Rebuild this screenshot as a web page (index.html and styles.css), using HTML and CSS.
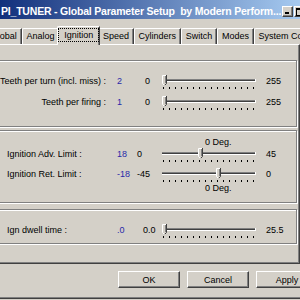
FILE: index.html
```html
<!DOCTYPE html>
<html>
<head>
<meta charset="utf-8">
<link rel="stylesheet" href="styles.css">
</head>
<body>
<svg class="defs" width="0" height="0">
  <defs>
    <g id="track">
      <rect x="2" y="4" width="94" height="1" fill="#808080"/>
      <rect x="2" y="5" width="93" height="1" fill="#404040"/>
      <rect x="2" y="6" width="94" height="1" fill="#ffffff"/>
      <rect x="95" y="4" width="1" height="3" fill="#ffffff"/>
      <path d="M3.5 12v2M9.5 12v2M15.5 12v2M21.5 12v2M27.5 12v2M33.5 12v2M39.5 12v2M45.5 12v2M51.5 12v2M57.5 12v2M63.5 12v2M69.5 12v2M75.5 12v2M81.5 12v2M87.5 12v2M93.5 12v2" stroke="#000" stroke-width="1" fill="none"/>
    </g>
    <g id="thumb">
      <path d="M0 0h5v8l-2.5 2.5L0 8z" fill="#D4D0C8"/>
      <path d="M0.5 8.5V0.5H4" stroke="#fff" fill="none"/>
      <path d="M4.5 0V8.5L2.5 10.5" stroke="#404040" fill="none"/>
      <path d="M3.5 1V8" stroke="#808080" fill="none"/>
      <path d="M0.5 8.5L2.5 10.5" stroke="#fff" fill="none"/>
    </g>
  </defs>
</svg>
<div class="frame">
  <div class="titlebar">
    <span class="title">PI_TUNER - Global Parameter Setup  by Modern Perform...</span>
    <span class="cbtn cmin"></span>
    <span class="cbtn cmax"></span>
    <span class="cbtn cclose"></span>
  </div>
  <div class="tabs">
    <span class="tab">Global</span>
    <span class="tab">Analog</span>
    <span class="tab sel"><span class="focus">Ignition</span></span>
    <span class="tab">Speed</span>
    <span class="tab">Cylinders</span>
    <span class="tab">Switch</span>
    <span class="tab">Modes</span>
    <span class="tab">System Config</span>
  </div>
  <div class="panel">
    <div class="group g1">
      <div class="row">
        <span class="lbl">Teeth per turn (incl. miss) :</span>
        <span class="val">2</span>
        <span class="min">0</span>
        <svg class="sl" width="100" height="16" viewBox="0 0 100 16"><use href="#track"/><use href="#thumb" x="2"/></svg>
        <span class="max">255</span>
      </div>
      <div class="row">
        <span class="lbl">Teeth per firing :</span>
        <span class="val">1</span>
        <span class="min">0</span>
        <svg class="sl" width="100" height="16" viewBox="0 0 100 16"><use href="#track"/><use href="#thumb" x="2"/></svg>
        <span class="max">255</span>
      </div>
    </div>
    <div class="group g2">
      <div class="deg top">0 Deg.</div>
      <div class="row">
        <span class="lbl">Ignition Adv. Limit :</span>
        <span class="val">18</span>
        <span class="min">0</span>
        <svg class="sl" width="100" height="16" viewBox="0 0 100 16"><use href="#track"/><use href="#thumb" x="38"/></svg>
        <span class="max">45</span>
      </div>
      <div class="row">
        <span class="lbl">Ignition Ret. Limit :</span>
        <span class="val">-18</span>
        <span class="min">-45</span>
        <svg class="sl" width="100" height="16" viewBox="0 0 100 16"><use href="#track"/><use href="#thumb" x="56"/></svg>
        <span class="max">0</span>
      </div>
      <div class="deg bot">0 Deg.</div>
    </div>
    <div class="group g3">
      <div class="row">
        <span class="lbl">Ign dwell time :</span>
        <span class="val">.0</span>
        <span class="min">0.0</span>
        <svg class="sl" width="100" height="16" viewBox="0 0 100 16"><use href="#track"/><use href="#thumb" x="2"/></svg>
        <span class="max">25.5</span>
      </div>
    </div>
  </div>
  <div class="btns">
    <span class="btn">OK</span>
    <span class="btn">Cancel</span>
    <span class="btn">Apply</span>
  </div>
</div>
</body>
</html>
```
FILE: styles.css
```css
* { box-sizing: border-box; margin: 0; padding: 0; }
html, body { width: 300px; height: 300px; overflow: hidden; background: #D4D0C8; }
body { font-family: "Liberation Sans", Arial, sans-serif; font-size: 9px; color: #000; }
.defs { display: block; width: 0; height: 0; }

.frame { height: 298px; border-bottom: 1px solid #808080; box-shadow: 0 1px 0 #404040; }

.titlebar {
  width: 320px; height: 19px; display: flex; align-items: flex-start;
  padding: 0 2px 0 1px;
  background: linear-gradient(90deg, #12307c 0px, #a6caf0 300px);
}
.title {
  flex: 1; min-width: 0; overflow: hidden; white-space: pre;
  color: #fff; font-weight: bold; font-size: 10.5px; letter-spacing: -0.2px;
  line-height: 12px; padding-top: 5px;
}
.cbtn {
  flex: none; width: 11px; height: 11px; margin-top: 6px; margin-left: 1px;
  background: #D4D0C8; border: 1px solid; border-color: #fff #404040 #404040 #fff;
  box-shadow: inset -1px -1px #808080; position: relative;
}
.cmax { margin-left: 1px; }
.cclose { margin-left: 2px; }
.cmin::after { content: ""; position: absolute; left: 2px; bottom: 2px; width: 4px; height: 2px; background: #000; }
.cmax::after { content: ""; position: absolute; left: 1px; top: 1px; width: 6px; height: 5px; border: 1px solid #000; border-top-width: 2px; }

.tabs { display: flex; align-items: flex-end; height: 18px; margin: 7px 0 0 -14px; }
.tab {
  flex: none; height: 16px; padding: 0 3.83px; white-space: nowrap;
  border-top: 1px solid #fff; border-left: 1px solid #fff; border-right: 1px solid #404040;
  box-shadow: inset -1px 0 #808080; border-top-left-radius: 2px;
  line-height: 14px;
}
.tab.sel {
  height: 19px; margin: 0 -2px -1px; padding: 1px 1px 0;
  position: relative; z-index: 1; background: #D4D0C8;
}
.focus { display: block; margin-top: 1px; padding: 0 4.83px; line-height: 12px; outline: 1px dotted #000; }

.panel {
  margin-left: -17px; width: 317px; height: 220px;
  border: 1px solid; border-color: #fff #404040 #404040 #fff;
  box-shadow: inset -1px -1px #808080;
  padding: 15px 2px 0 7px;
}
.group { border: 1px solid #808080; box-shadow: inset 1px 1px #fff, 1px 1px #fff; padding-left: 8px; }
.g1 { height: 67px; padding-top: 9px; }
.g2 { height: 73px; margin-top: 3px; padding-top: 6px; }
.g3 { height: 35px; margin-top: 6px; padding-top: 9px; }

.row { display: flex; align-items: center; height: 21px; white-space: nowrap; }
.g2 .row { height: 20px; }
.lbl { flex: none; width: 117px; }
.g1 .lbl { text-align: right; padding-right: 11px; }
.g2 .lbl, .g3 .lbl { padding-left: 7px; }
.val { flex: none; width: 20px; color: #2828a8; }
.min { flex: none; width: 23px; }
.g1 .min { padding-left: 8px; }
.g3 .min { padding-left: 6px; }
.sl { flex: none; display: block; margin-top: 4px; }
.max { margin-left: 6px; }

.deg { padding-left: 205px; height: 10px; line-height: 10px; }
.deg.top { margin-bottom: -3px; }
.deg.bot { margin-top: -1px; }

.btns { display: flex; gap: 7px; padding-left: 118px; margin-top: 7px; }
.btn {
  flex: none; width: 62px; height: 17px;
  border: 1px solid; border-color: #fff #404040 #404040 #fff;
  box-shadow: inset -1px -1px #808080;
  display: flex; align-items: center; justify-content: center;
}
```
